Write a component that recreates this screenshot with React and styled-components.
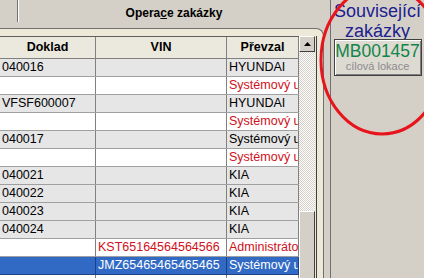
import React from 'react';
import styled, { createGlobalStyle } from 'styled-components';

const GlobalStyle = createGlobalStyle`
  html, body {
    margin: 0;
    padding: 0;
    width: 424px;
    height: 278px;
    overflow: hidden;
    background: #d4d0c8;
    font-family: "Liberation Sans", Arial, sans-serif;
  }
`

const Page = styled.div`
  position: relative;
  display: flex;
  width: 424px;
  height: 278px;
  overflow: hidden;
`

const Main = styled.div`
  width: 330px;
  display: flex;
  flex-direction: column;
`

const TitleBar = styled.div`
  height: 28px;
  display: flex;
  align-items: flex-start;
`

const TitleStub = styled.div`
  width: 17px;
  height: 22px;
  border-right: 1px solid #707070;
  box-shadow: 1px 0 0 #ffffff;
`

const Title = styled.div`
  flex: 1;
  line-height: 26px;
  text-align: center;
  font-size: 12px;
  font-weight: bold;
  color: #000;
`

const Frame = styled.div`
  flex: 1;
  width: 317px;
  margin-right: 6px;
  padding: 7px 6px 0 0;
  background: #ece9d8;
  border-top: 1px solid #707070;
  border-right: 1px solid #707070;
  border-top-right-radius: 8px;
  overflow: hidden;
`

const Grid = styled.div`
  display: flex;
  border-right: 1px solid #404040;
  height: 100%;
`

const Table = styled.div`
  width: 299px;
  display: flex;
  flex-direction: column;
  background: #fff;
`

const HeaderRow = styled.div`
  display: grid;
  grid-template-columns: 96px 131px 72px;
  border-top: 1px solid #606060;
  border-bottom: 1px solid #808080;
  background: #ebe8de;
`

const HeaderCell = styled.div`
  height: 21px;
  line-height: 21px;
  text-align: center;
  font-size: 12.5px;
  font-weight: bold;
  border-right: 1px solid #808080;
`

const rowBg = {
  grey: '#e6e6e6',
  white: '#ffffff',
  selected: '#316ac5',
}

const Row = styled.div`
  display: grid;
  grid-template-columns: 96px 131px 72px;
  background: ${(p) => rowBg[p.$tone]};
  color: ${(p) => (p.$tone === 'selected' ? '#fff' : '#000')};
  border-bottom: 1px solid ${(p) => (p.$tone === 'selected' ? '#1c3f86' : '#a0a0a0')};
`

const Cell = styled.div`
  height: 17px;
  line-height: 17px;
  padding-left: ${(p) => (p.$first ? '2px' : '2px')};
  font-size: 12.5px;
  white-space: nowrap;
  overflow: hidden;
  color: ${(p) => (p.$red ? '#d0101a' : 'inherit')};
  border-right: 1px solid ${(p) => (p.$sel ? '#1c3f86' : '#808080')};
`

const Scrollbar = styled.div`
  width: 16px;
  display: flex;
  flex-direction: column;
  background: repeating-conic-gradient(#d4d0c8 0 25%, #ffffff 0 50%) 0 0 / 2px 2px;
`

const ScrollButton = styled.div`
  height: 16px;
  box-sizing: border-box;
  background: #d4d0c8;
  border-top: 1px solid #ffffff;
  border-left: 1px solid #ffffff;
  border-right: 1px solid #404040;
  border-bottom: 1px solid #404040;
  display: flex;
  align-items: center;
  justify-content: center;
`

const Track = styled.div`
  height: 159px;
`

const Thumb = styled.div`
  flex: 1;
  background: #d4d0c8;
  border-top: 1px solid #ffffff;
  border-left: 1px solid #ffffff;
  border-right: 1px solid #404040;
`

const Side = styled.div`
  flex: 1;
  border-left: 1px solid #707070;
  display: flex;
  flex-direction: column;
  align-items: center;
`

const SideTitle = styled.div`
  margin-top: 1px;
  font-size: 18px;
  line-height: 20px;
  text-align: center;
  color: #202090;
`

const OrderButton = styled.div`
  margin-top: -2px;
  width: 88px;
  height: 37px;
  box-sizing: border-box;
  border: 1px solid #404040;
  box-shadow: inset 1px 1px 0 #ffffff, inset -1px -1px 0 #808080;
  background: #dddad2;
  display: flex;
  flex-direction: column;
  align-items: center;
  justify-content: center;
`

const OrderCode = styled.div`
  font-size: 17.5px;
  line-height: 18px;
  color: #128548;
`

const OrderHint = styled.div`
  font-size: 11px;
  line-height: 13px;
  color: #8c8c8c;
`

const Annotation = styled.svg`
  position: absolute;
  left: 0;
  top: 0;
  pointer-events: none;
`

const rows = [
  { doklad: '040016', vin: '', user: 'HYUNDAI', tone: 'grey' },
  { doklad: '', vin: '', user: 'Systémový uživatel', red: true, tone: 'white' },
  { doklad: 'VFSF600007', vin: '', user: 'HYUNDAI', tone: 'grey' },
  { doklad: '', vin: '', user: 'Systémový uživatel', red: true, tone: 'white' },
  { doklad: '040017', vin: '', user: 'Systémový uživatel', tone: 'grey' },
  { doklad: '', vin: '', user: 'Systémový uživatel', red: true, tone: 'white' },
  { doklad: '040021', vin: '', user: 'KIA', tone: 'grey' },
  { doklad: '040022', vin: '', user: 'KIA', tone: 'grey' },
  { doklad: '040023', vin: '', user: 'KIA', tone: 'grey' },
  { doklad: '040024', vin: '', user: 'KIA', tone: 'grey' },
  { doklad: '', vin: 'KST65164564564566', user: 'Administrátor', red: true, tone: 'white' },
  { doklad: '', vin: 'JMZ65465465465465', user: 'Systémový uživatel', tone: 'selected' },
  { doklad: '', vin: '', user: '', tone: 'white' },
]

const App = () => {
  return (
    <Page>
      <GlobalStyle />
      <Main>
        <TitleBar>
          <TitleStub />
          <Title>
            Opera<u>c</u>e zakázky
          </Title>
        </TitleBar>
        <Frame>
          <Grid>
            <Table>
              <HeaderRow>
                <HeaderCell>Doklad</HeaderCell>
                <HeaderCell>VIN</HeaderCell>
                <HeaderCell>Převzal</HeaderCell>
              </HeaderRow>
              {rows.map((row, i) => {
                const sel = row.tone === 'selected';
                return (
                  <Row key={i} $tone={row.tone}>
                    <Cell $first $sel={sel}>{row.doklad}</Cell>
                    <Cell $red={row.red} $sel={sel}>{row.vin}</Cell>
                    <Cell $red={row.red} $sel={sel}>{row.user}</Cell>
                  </Row>
                );
              })}
            </Table>
            <Scrollbar>
              <ScrollButton>
                <svg width="7" height="4" viewBox="0 0 7 4">
                  <path d="M3.5 0 L7 4 L0 4 Z" fill="#000" />
                </svg>
              </ScrollButton>
              <Track />
              <Thumb />
            </Scrollbar>
          </Grid>
        </Frame>
      </Main>
      <Side>
        <SideTitle>
          Související
          <br />
          zakázky
        </SideTitle>
        <OrderButton>
          <OrderCode>MB001457</OrderCode>
          <OrderHint>cílová lokace</OrderHint>
        </OrderButton>
      </Side>
      <Annotation width="424" height="278" viewBox="0 0 424 278">
        <ellipse cx="382" cy="60" rx="61" ry="74" fill="none" stroke="#e8141c" strokeWidth="3" />
      </Annotation>
    </Page>
  );
};

export default App;
